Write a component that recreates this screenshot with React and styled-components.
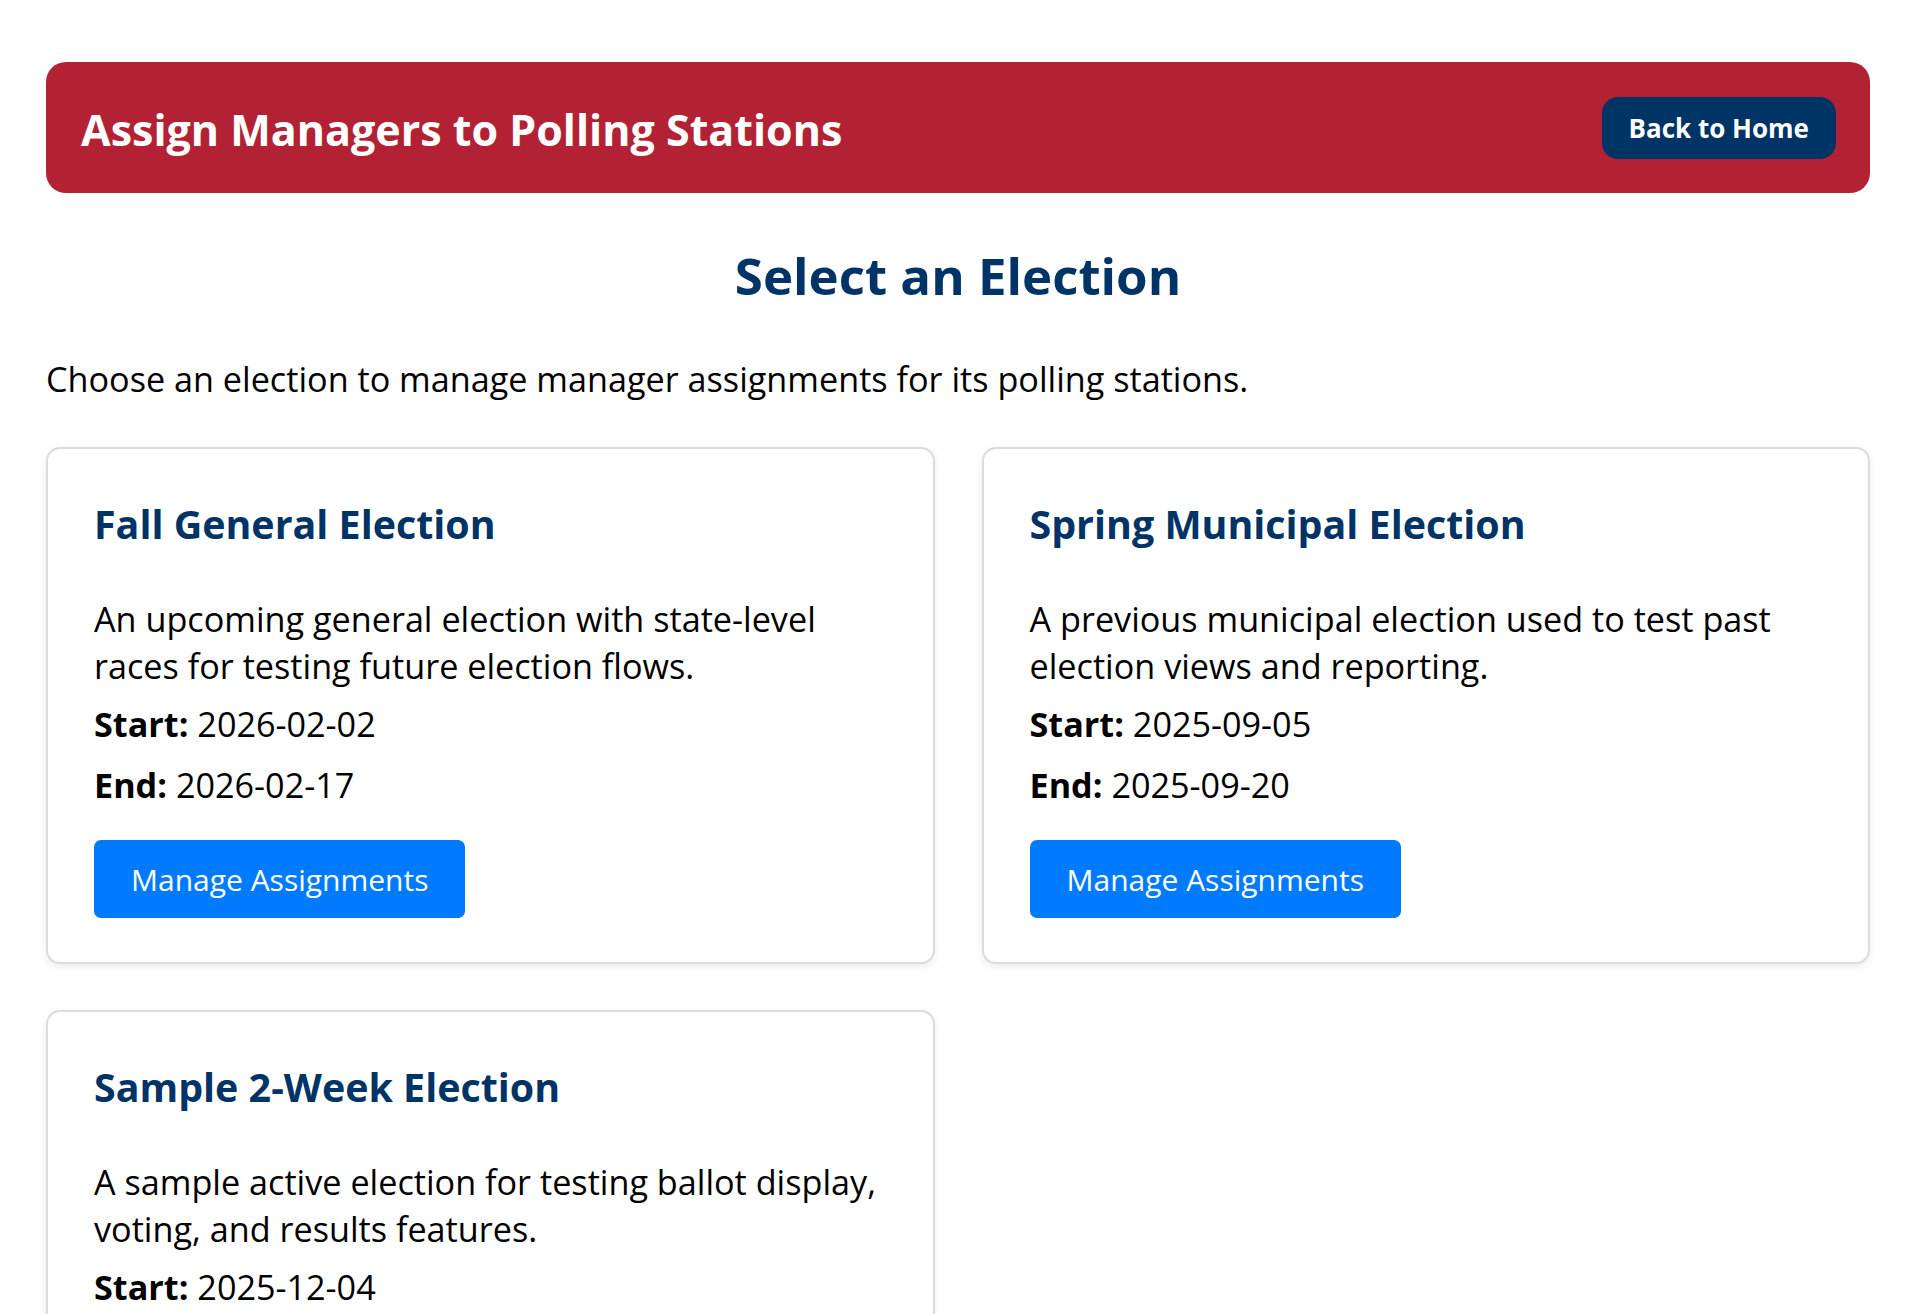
import React from 'react';
import styled, { createGlobalStyle } from 'styled-components';

const elections = [
  {
    id: 1,
    name: 'Fall General Election',
    description: 'An upcoming general election with state-level races for testing future election flows.',
    start: '2026-02-02',
    end: '2026-02-17',
  },
  {
    id: 2,
    name: 'Spring Municipal Election',
    description: 'A previous municipal election used to test past election views and reporting.',
    start: '2025-09-05',
    end: '2025-09-20',
  },
  {
    id: 3,
    name: 'Sample 2-Week Election',
    description: 'A sample active election for testing ballot display, voting, and results features.',
    start: '2025-12-04',
    end: '2025-12-18',
  },
];

function App() {
  return (
    <>
      <GlobalStyle />
      <Page>
        <Header>
          <Title>Assign Managers to Polling Stations</Title>
          <HomeButton href="#">Back to Home</HomeButton>
        </Header>

        <Heading>Select an Election</Heading>
        <Intro>Choose an election to manage manager assignments for its polling stations.</Intro>

        <Grid>
          {elections.map((e) => (
            <Card key={e.id}>
              <CardTitle>{e.name}</CardTitle>
              <Description>{e.description}</Description>
              <DateLine>
                <strong>Start:</strong> {e.start}
              </DateLine>
              <DateLine>
                <strong>End:</strong> {e.end}
              </DateLine>
              <ManageButton>Manage Assignments</ManageButton>
            </Card>
          ))}
        </Grid>
      </Page>
    </>
  );
}

export default App;

const GlobalStyle = createGlobalStyle`
  * { box-sizing: border-box; }
  body {
    margin: 0;
    background: #fff;
    font-family: "Open Sans", "Noto Sans", sans-serif;
    color: #000;
  }
`;

const Page = styled.div`
  padding: 62px 42px 40px 46px;
`;

const Header = styled.header`
  display: flex;
  align-items: center;
  justify-content: space-between;
  min-height: 131px;
  padding: 0 34px 0 35px;
  background: #b22234;
  border-radius: 20px;
`;

const Title = styled.h1`
  margin: 4px 0 0;
  font-size: 43px;
  line-height: 1.2;
  font-weight: 700;
  color: #fff;
`;

const HomeButton = styled.a`
  display: inline-flex;
  align-items: center;
  height: 62px;
  padding: 0 27px;
  background: #003366;
  color: #fff;
  font-size: 26px;
  font-weight: 700;
  text-decoration: none;
  border-radius: 16px;
`;

const Heading = styled.h2`
  margin: 52px 0 49px;
  text-align: center;
  font-size: 51px;
  line-height: 1.2;
  font-weight: 700;
  color: #003366;
`;

const Intro = styled.p`
  margin: 0 0 45px;
  font-size: 34.2px;
  line-height: 47px;
`;

const Grid = styled.div`
  display: grid;
  grid-template-columns: 1fr 1fr;
  gap: 46px 47px;
`;

const Card = styled.div`
  padding: 47px 46px 44px;
  border: 2px solid #dcdcdc;
  border-radius: 14px;
  background: #fff;
  box-shadow: 0 3px 8px rgba(0, 0, 0, 0.08);
`;

const CardTitle = styled.h3`
  margin: 0 0 43px;
  font-size: 39.4px;
  line-height: 56px;
  font-weight: 700;
  color: #003366;
`;

const Description = styled.p`
  margin: 0 0 11px;
  font-size: 34.2px;
  line-height: 47px;
`;

const DateLine = styled.p`
  margin: 0 0 14px;
  font-size: 34.2px;
  line-height: 47px;

  & + & {
    margin-bottom: 32px;
  }
`;

const ManageButton = styled.button`
  display: inline-flex;
  align-items: center;
  height: 78px;
  padding: 0 37px;
  border: none;
  border-radius: 7px;
  background: #007bff;
  color: #fff;
  font-family: inherit;
  font-size: 30px;
  cursor: pointer;
`;
